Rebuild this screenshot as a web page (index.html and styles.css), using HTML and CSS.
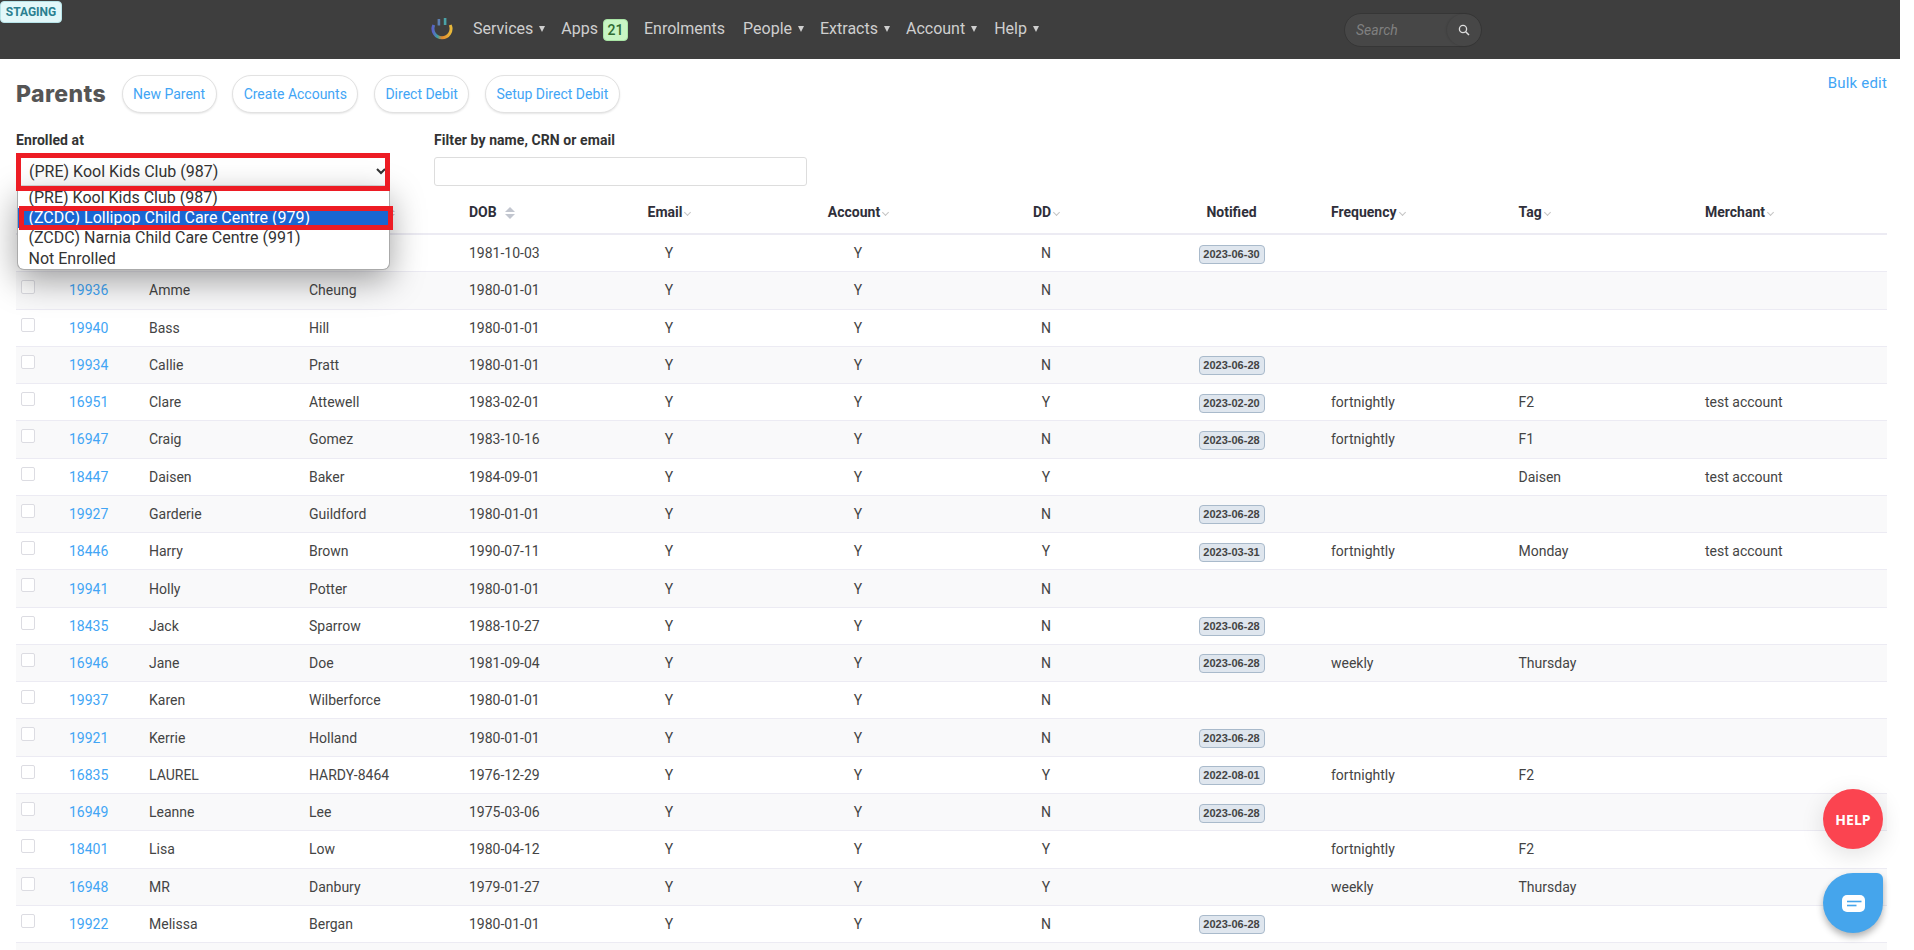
FILE: index.html
```html
<!DOCTYPE html>
<html lang="en">
<head>
<meta charset="utf-8">
<title>Parents</title>
<link rel="stylesheet" href="styles.css">
</head>
<body>
<span class="staging">STAGING</span>
<header class="topbar">
  <svg class="logo" width="22" height="24" viewBox="0 0 22 24">
    <defs><linearGradient id="lg" x1="0" y1="0" x2="1" y2="0">
      <stop offset="0" stop-color="#5a62c8"/><stop offset=".25" stop-color="#3fa0a0"/><stop offset=".5" stop-color="#e2872c"/><stop offset="1" stop-color="#e8b93a"/>
    </linearGradient></defs>
    <path d="M2.8 7A9 9 0 1 0 19.2 7" fill="none" stroke="url(#lg)" stroke-width="3"/>
    <rect x="6.6" y="1" width="2.6" height="6.5" fill="#5d7fb0"/>
    <rect x="12.8" y="0" width="2.6" height="7" fill="#4aa3a8"/>
  </svg>
  <nav class="nav">
    <a class="nav-item">Services<i class="tri"></i></a>
    <a class="nav-item">Apps<b class="count">21</b></a>
    <a class="nav-item nav-wide">Enrolments</a>
    <a class="nav-item">People<i class="tri"></i></a>
    <a class="nav-item">Extracts<i class="tri"></i></a>
    <a class="nav-item nav-wide-sm">Account<i class="tri"></i></a>
    <a class="nav-item">Help<i class="tri"></i></a>
  </nav>
  <div class="search">
    <span class="search-text">Search</span>
    <span class="search-btn">
      <svg width="12" height="12" viewBox="0 0 12 12"><circle cx="5" cy="5" r="3.6" fill="none" stroke="#ddd" stroke-width="1.3"/><path d="M7.7 7.7L11 11" stroke="#ddd" stroke-width="1.5"/></svg>
    </span>
  </div>
</header>

<main class="page">
  <div class="toolbar">
    <h1 class="title">Parents</h1>
    <a class="pill">New Parent</a>
    <a class="pill">Create Accounts</a>
    <a class="pill">Direct Debit</a>
    <a class="pill">Setup Direct Debit</a>
    <a class="bulk">Bulk edit</a>
  </div>

  <div class="filters">
    <div class="field field-enrolled">
      <label class="field-label">Enrolled at</label>
      <div class="select-wrap">
        <select class="enrolled-select"><option>(PRE) Kool Kids Club (987)</option></select>
        <span class="mark mark-select"></span>
        <div class="dropdown">
          <div class="opt">(PRE) Kool Kids Club (987)</div>
          <div class="opt opt-selected">(ZCDC) Lollipop Child Care Centre (979)</div>
          <div class="opt">(ZCDC) Narnia Child Care Centre (991)</div>
          <div class="opt">Not Enrolled</div>
          <span class="mark mark-option"></span>
        </div>
      </div>
    </div>
    <div class="field field-filter">
      <label class="field-label">Filter by name, CRN or email</label>
      <input class="filter-input" type="text">
    </div>
  </div>

  <table class="grid">
    <colgroup>
      <col class="w-check"><col class="w-id"><col class="w-name"><col class="w-name"><col class="w-dob">
      <col class="w-email"><col class="w-account"><col class="w-dd"><col class="w-notified">
      <col class="w-freq"><col class="w-tag"><col class="w-merchant">
    </colgroup>
    <thead>
      <tr>
        <th></th><th></th><th></th>
        <th><i class="sort-stub"></i></th>
        <th>DOB<i class="sort"></i></th>
        <th class="mid">Email<i class="chev"></i></th>
        <th class="mid">Account<i class="chev"></i></th>
        <th class="mid">DD<i class="chev"></i></th>
        <th class="mid">Notified</th>
        <th>Frequency<i class="chev"></i></th>
        <th>Tag<i class="chev"></i></th>
        <th>Merchant<i class="chev"></i></th>
      </tr>
    </thead>
    <tbody>
      <tr><td class="chk"></td><td></td><td></td><td></td><td>1981-10-03</td><td class="mid">Y</td><td class="mid">Y</td><td class="mid">N</td><td class="mid"><span class="date">2023-06-30</span></td><td></td><td></td><td></td></tr>
      <tr><td class="chk"><input class="box" type="checkbox"></td><td><a class="lnk">19936</a></td><td>Amme</td><td>Cheung</td><td>1980-01-01</td><td class="mid">Y</td><td class="mid">Y</td><td class="mid">N</td><td class="mid"></td><td></td><td></td><td></td></tr>
      <tr><td class="chk"><input class="box" type="checkbox"></td><td><a class="lnk">19940</a></td><td>Bass</td><td>Hill</td><td>1980-01-01</td><td class="mid">Y</td><td class="mid">Y</td><td class="mid">N</td><td class="mid"></td><td></td><td></td><td></td></tr>
      <tr><td class="chk"><input class="box" type="checkbox"></td><td><a class="lnk">19934</a></td><td>Callie</td><td>Pratt</td><td>1980-01-01</td><td class="mid">Y</td><td class="mid">Y</td><td class="mid">N</td><td class="mid"><span class="date">2023-06-28</span></td><td></td><td></td><td></td></tr>
      <tr><td class="chk"><input class="box" type="checkbox"></td><td><a class="lnk">16951</a></td><td>Clare</td><td>Attewell</td><td>1983-02-01</td><td class="mid">Y</td><td class="mid">Y</td><td class="mid">Y</td><td class="mid"><span class="date">2023-02-20</span></td><td>fortnightly</td><td>F2</td><td>test account</td></tr>
      <tr><td class="chk"><input class="box" type="checkbox"></td><td><a class="lnk">16947</a></td><td>Craig</td><td>Gomez</td><td>1983-10-16</td><td class="mid">Y</td><td class="mid">Y</td><td class="mid">N</td><td class="mid"><span class="date">2023-06-28</span></td><td>fortnightly</td><td>F1</td><td></td></tr>
      <tr><td class="chk"><input class="box" type="checkbox"></td><td><a class="lnk">18447</a></td><td>Daisen</td><td>Baker</td><td>1984-09-01</td><td class="mid">Y</td><td class="mid">Y</td><td class="mid">Y</td><td class="mid"></td><td></td><td>Daisen</td><td>test account</td></tr>
      <tr><td class="chk"><input class="box" type="checkbox"></td><td><a class="lnk">19927</a></td><td>Garderie</td><td>Guildford</td><td>1980-01-01</td><td class="mid">Y</td><td class="mid">Y</td><td class="mid">N</td><td class="mid"><span class="date">2023-06-28</span></td><td></td><td></td><td></td></tr>
      <tr><td class="chk"><input class="box" type="checkbox"></td><td><a class="lnk">18446</a></td><td>Harry</td><td>Brown</td><td>1990-07-11</td><td class="mid">Y</td><td class="mid">Y</td><td class="mid">Y</td><td class="mid"><span class="date">2023-03-31</span></td><td>fortnightly</td><td>Monday</td><td>test account</td></tr>
      <tr><td class="chk"><input class="box" type="checkbox"></td><td><a class="lnk">19941</a></td><td>Holly</td><td>Potter</td><td>1980-01-01</td><td class="mid">Y</td><td class="mid">Y</td><td class="mid">N</td><td class="mid"></td><td></td><td></td><td></td></tr>
      <tr><td class="chk"><input class="box" type="checkbox"></td><td><a class="lnk">18435</a></td><td>Jack</td><td>Sparrow</td><td>1988-10-27</td><td class="mid">Y</td><td class="mid">Y</td><td class="mid">N</td><td class="mid"><span class="date">2023-06-28</span></td><td></td><td></td><td></td></tr>
      <tr><td class="chk"><input class="box" type="checkbox"></td><td><a class="lnk">16946</a></td><td>Jane</td><td>Doe</td><td>1981-09-04</td><td class="mid">Y</td><td class="mid">Y</td><td class="mid">N</td><td class="mid"><span class="date">2023-06-28</span></td><td>weekly</td><td>Thursday</td><td></td></tr>
      <tr><td class="chk"><input class="box" type="checkbox"></td><td><a class="lnk">19937</a></td><td>Karen</td><td>Wilberforce</td><td>1980-01-01</td><td class="mid">Y</td><td class="mid">Y</td><td class="mid">N</td><td class="mid"></td><td></td><td></td><td></td></tr>
      <tr><td class="chk"><input class="box" type="checkbox"></td><td><a class="lnk">19921</a></td><td>Kerrie</td><td>Holland</td><td>1980-01-01</td><td class="mid">Y</td><td class="mid">Y</td><td class="mid">N</td><td class="mid"><span class="date">2023-06-28</span></td><td></td><td></td><td></td></tr>
      <tr><td class="chk"><input class="box" type="checkbox"></td><td><a class="lnk">16835</a></td><td>LAUREL</td><td>HARDY-8464</td><td>1976-12-29</td><td class="mid">Y</td><td class="mid">Y</td><td class="mid">Y</td><td class="mid"><span class="date">2022-08-01</span></td><td>fortnightly</td><td>F2</td><td></td></tr>
      <tr><td class="chk"><input class="box" type="checkbox"></td><td><a class="lnk">16949</a></td><td>Leanne</td><td>Lee</td><td>1975-03-06</td><td class="mid">Y</td><td class="mid">Y</td><td class="mid">N</td><td class="mid"><span class="date">2023-06-28</span></td><td></td><td></td><td></td></tr>
      <tr><td class="chk"><input class="box" type="checkbox"></td><td><a class="lnk">18401</a></td><td>Lisa</td><td>Low</td><td>1980-04-12</td><td class="mid">Y</td><td class="mid">Y</td><td class="mid">Y</td><td class="mid"></td><td>fortnightly</td><td>F2</td><td></td></tr>
      <tr><td class="chk"><input class="box" type="checkbox"></td><td><a class="lnk">16948</a></td><td>MR</td><td>Danbury</td><td>1979-01-27</td><td class="mid">Y</td><td class="mid">Y</td><td class="mid">Y</td><td class="mid"></td><td>weekly</td><td>Thursday</td><td></td></tr>
      <tr><td class="chk"><input class="box" type="checkbox"></td><td><a class="lnk">19922</a></td><td>Melissa</td><td>Bergan</td><td>1980-01-01</td><td class="mid">Y</td><td class="mid">Y</td><td class="mid">N</td><td class="mid"><span class="date">2023-06-28</span></td><td></td><td></td><td></td></tr>
      <tr><td class="chk"></td><td></td><td></td><td></td><td></td><td></td><td></td><td></td><td></td><td></td><td></td><td></td></tr>
    </tbody>
  </table>
</main>

<a class="help-fab">HELP</a>
<a class="chat-fab">
  <svg width="23" height="17" viewBox="0 0 23 17"><rect width="23" height="17" rx="5" fill="#fff"/><path d="M5 6.5H19.5" stroke="#45a5ec" stroke-width="1.6"/><path d="M5 10.5H14.5" stroke="#45a5ec" stroke-width="1.6"/></svg>
</a>
</body>
</html>
```
FILE: styles.css
```css
* { box-sizing: border-box; }
html, body { height: 950px; overflow: hidden; }
body {
  margin: 0;
  width: 1900px;
  position: relative;
  background: #fff;
  color: #3a3a3a;
  font-family: Roboto, "Liberation Sans", sans-serif;
  font-size: 14px;
}

/* top bar */
.staging {
  position: absolute;
  left: 0;
  top: 1px;
  z-index: 5;
  width: 62px;
  height: 22px;
  line-height: 20px;
  text-align: center;
  background: #e2f7f9;
  border: 1px solid #b6e3e8;
  border-radius: 4px;
  color: #2b7f90;
  font-size: 12px;
  font-weight: 700;
}
.topbar {
  height: 59px;
  background: #3e3e3e;
  display: flex;
  align-items: center;
  padding: 0 418px 0 431px;
}
.logo { flex: none; margin-right: 20px; }
.nav { display: flex; align-items: center; gap: 16px; margin-top: -1px; }
.nav-item {
  display: flex;
  align-items: center;
  color: #cfcfcf;
  font-size: 16px;
  line-height: 22px;
}
.nav-wide { margin-right: 2px; }
.nav-wide-sm { margin-right: 1px; }
.tri {
  width: 0;
  height: 0;
  margin-left: 6px;
  border-left: 3.5px solid transparent;
  border-right: 3.5px solid transparent;
  border-top: 6px solid #cfcfcf;
}
.count {
  width: 25px;
  height: 22px;
  margin: 1px 0 -1px 5px;
  line-height: 20px;
  text-align: center;
  background: #c8f5c4;
  border: 1px solid #a9e5a5;
  border-radius: 4px;
  color: #2f6b32;
  font-size: 14px;
  font-weight: 500;
}
.search {
  margin-left: auto;
  width: 138px;
  height: 34px;
  display: flex;
  align-items: center;
  justify-content: space-between;
  padding-left: 11px;
  background: #474747;
  border: 1px solid #363636;
  border-radius: 17px;
}
.search-text { color: #808080; font-size: 14px; font-style: italic; }
.search-btn {
  width: 34px;
  height: 32px;
  display: flex;
  align-items: center;
  justify-content: center;
  border-radius: 50%;
  box-shadow: -1px 0 2px rgba(0,0,0,.12);
}

/* page */
.page { padding: 16px 13px 0 16px; }
.toolbar { display: flex; align-items: center; height: 38px; gap: 15.5px; }
.title {
  margin: 0;
  width: 90px;
  color: #555;
  font-family: Inter, sans-serif;
  font-size: 23px;
  font-weight: 800;
  letter-spacing: .4px;
  line-height: 38px;
  white-space: nowrap;
}
.pill {
  height: 38px;
  line-height: 36px;
  padding: 0 10.5px;
  background: #fff;
  border: 1px solid #e2e2e2;
  border-radius: 19px;
  box-shadow: 0 1px 2px rgba(0,0,0,.1);
  color: #42a5f5;
  font-size: 14px;
}
.bulk {
  margin-left: auto;
  align-self: flex-start;
  margin-top: -2px;
  line-height: 20px;
  color: #42a5f5;
  font-size: 15px;
  letter-spacing: .2px;
}

.filters { display: flex; gap: 44px; margin-top: 17px; }
.field-enrolled { width: 374px; }
.field-filter { width: 373px; }
.field-label {
  display: block;
  height: 26px;
  line-height: 20px;
  color: #333;
  font-size: 14px;
  font-weight: 700;
  letter-spacing: .08px;
}
.select-wrap { position: relative; }
.enrolled-select {
  display: block;
  width: 100%;
  height: 30px;
  padding-left: 8px;
  background: #fff;
  border: 1px solid #ddd;
  border-radius: 3px;
  color: #333;
  font-family: Roboto, sans-serif;
  font-size: 16px;
}
.filter-input {
  display: block;
  width: 100%;
  height: 29px;
  margin-top: 1px;
  background: #fff;
  border: 1px solid #ddd;
  border-radius: 3px;
}
.mark { position: absolute; display: block; border: 5px solid #ed1c24; z-index: 3; }
.mark-select { left: 0; top: -3px; width: 374px; height: 38px; }
.dropdown {
  position: absolute;
  z-index: 2;
  left: 0.5px;
  top: 31.5px;
  width: 373px;
  height: 82.5px;
  background: #fff;
  border: 1px solid #aaa;
  border-top: 0;
  border-radius: 0 0 7px 7px;
  box-shadow: 0 10px 34px rgba(0,0,0,.38);
  color: #333;
  font-size: 16px;
}
.opt { height: 20.4px; line-height: 20px; padding-left: 11px; white-space: nowrap; }
.opt-selected { background: #1a66d2; color: #fff; }
.mark-option { left: 1.5px; top: 18.5px; width: 374px; height: 24px; }

/* table */
.grid {
  width: 1871px;
  margin-top: 5px;
  table-layout: fixed;
  border-collapse: separate;
  border-spacing: 0;
}
.w-check { width: 45px; }
.w-id { width: 80px; }
.w-name { width: 160px; }
.w-dob { width: 113px; }
.w-email { width: 190px; }
.w-account { width: 188px; }
.w-dd { width: 188px; }
.w-notified { width: 183px; }
.w-freq { width: 187.5px; }
.w-tag { width: 186.5px; }
.w-merchant { width: 190px; }
.grid th {
  height: 44px;
  padding: 0 8px;
  text-align: left;
  color: #2f2f3a;
  font-weight: 700;
  font-size: 14px;
  border-bottom: 2px solid #ecebf3;
}
.grid td {
  height: 37.27px;
  padding: 0 8px;
  border-bottom: 1px solid #ecebf3;
  color: #444;
  line-height: 20px;
}
.grid .mid { text-align: center; }
.grid tbody tr:nth-child(even) td { background: #f9f9fa; }
.grid .chk { padding: 8px 0 0 5px; vertical-align: top; }
.box {
  appearance: none;
  display: block;
  width: 14px;
  height: 14px;
  margin: 0;
  background: #fff;
  border: 1px solid #dcdce2;
  border-radius: 2px;
}
.lnk { color: #42a5f5; }
.date {
  display: inline-block;
  width: 66px;
  height: 19px;
  line-height: 17px;
  text-align: center;
  vertical-align: middle;
  background: #dfe6ee;
  border: 1px solid #a9bacb;
  border-radius: 4px;
  color: #444;
  font-family: "Liberation Sans", sans-serif;
  font-size: 11px;
  font-weight: 700;
}
.chev {
  display: inline-block;
  width: 5px;
  height: 5px;
  margin-left: 3px;
  border-right: 1px solid #c4c4c4;
  border-bottom: 1px solid #c4c4c4;
  transform: translateY(-2px) rotate(45deg);
}
.sort, .sort-stub {
  display: inline-block;
  position: relative;
  width: 10px;
  height: 12px;
  margin-left: 8px;
  vertical-align: -2px;
}
.sort-stub { margin-left: 76px; }
.sort::before, .sort::after, .sort-stub::before, .sort-stub::after {
  content: "";
  position: absolute;
  left: 0;
  border-left: 5px solid transparent;
  border-right: 5px solid transparent;
}
.sort::before, .sort-stub::before { top: 0; border-bottom: 5px solid #c2c6cf; }
.sort::after, .sort-stub::after { bottom: 0; border-top: 5px solid #c2c6cf; }

/* floating buttons */
.help-fab, .chat-fab {
  position: absolute;
  left: 1823px;
  width: 60px;
  height: 60px;
  display: flex;
  align-items: center;
  justify-content: center;
  z-index: 6;
}
.help-fab {
  top: 789px;
  border-radius: 50%;
  background: #fb4450;
  box-shadow: 0 6px 24px rgba(0,0,0,.12);
  color: #fff;
  font-family: "Open Sans", sans-serif;
  font-size: 14px;
  font-weight: 700;
}
.chat-fab {
  top: 873px;
  border-radius: 30px 6px 30px 30px;
  background: #45a5ec;
  box-shadow: 0 4px 7px rgba(0,0,0,.3);
}
```
